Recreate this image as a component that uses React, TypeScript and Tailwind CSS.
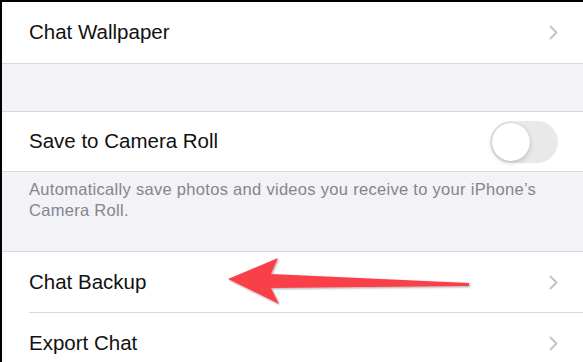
import React from "react";

function Chevron() {
  return (
    <svg width="9" height="15" viewBox="0 0 9 15" className="shrink-0">
      <path d="M1.5 1.5 L7.5 7.5 L1.5 13.5" fill="none" stroke="#c4c4c7" strokeWidth="2" strokeLinecap="round" strokeLinejoin="round" />
    </svg>
  );
}

function Row({ label, right, className = "" }: { label: string; right?: React.ReactNode; className?: string }) {
  return (
    <div className={`flex items-center justify-between bg-white pl-[27px] pr-[25px] ${className}`}>
      <span className="text-[20.5px] text-[#111]" style={{ fontFamily: "'Liberation Sans', Arial, sans-serif" }}>{label}</span>
      {right}
    </div>
  );
}

export default function App() {
  return (
    <div className="relative w-[583px] h-[362px] overflow-hidden bg-[#f2f2f7] border-t-2 border-l-2 border-black">
      <Row label="Chat Wallpaper" right={<Chevron />} className="h-[62px] border-b border-[#d9d9dc]" />
      <div className="h-[47px]" />
      <Row
        label="Save to Camera Roll"
        className="h-[61px] border-y border-[#d9d9dc] pr-[24px]"
        right={
          <div className="w-[68px] h-[42px] rounded-full bg-[#e9e9ea] p-[2px] flex items-center">
            <div className="w-[38px] h-[38px] rounded-full bg-white shadow-[0_2px_5px_rgba(0,0,0,0.18),0_0_1px_rgba(0,0,0,0.2)]" />
          </div>
        }
      />
      <div
        className="h-[79px] pl-[27px] pr-[30px] pt-[7px] text-[16.5px] leading-[21px] tracking-[0.3px] text-[#85858b]"
        style={{ fontFamily: "'Liberation Sans', Arial, sans-serif" }}
      >
        Automatically save photos and videos you receive to your iPhone’s Camera Roll.
      </div>
      <div className="bg-white border-t border-[#d9d9dc]">
        <Row label="Chat Backup" right={<Chevron />} className="h-[60px]" />
        <div className="ml-[27px] h-px bg-[#d9d9dc]" />
        <Row label="Export Chat" right={<Chevron />} className="h-[60px]" />
      </div>
      <svg className="absolute left-0 top-0 pointer-events-none" width="583" height="362" viewBox="0 0 583 362">
        <defs>
          <filter id="sh" x="-10%" y="-50%" width="120%" height="200%">
            <feDropShadow dx="1" dy="1" stdDeviation="0.8" floodColor="#000" floodOpacity="0.35" />
          </filter>
        </defs>
        <polygon
          points="226,277 276,256 269,272 467,281 467,284 269,286 277,302"
          fill="#f9414a"
          filter="url(#sh)"
        />
      </svg>
    </div>
  );
}
